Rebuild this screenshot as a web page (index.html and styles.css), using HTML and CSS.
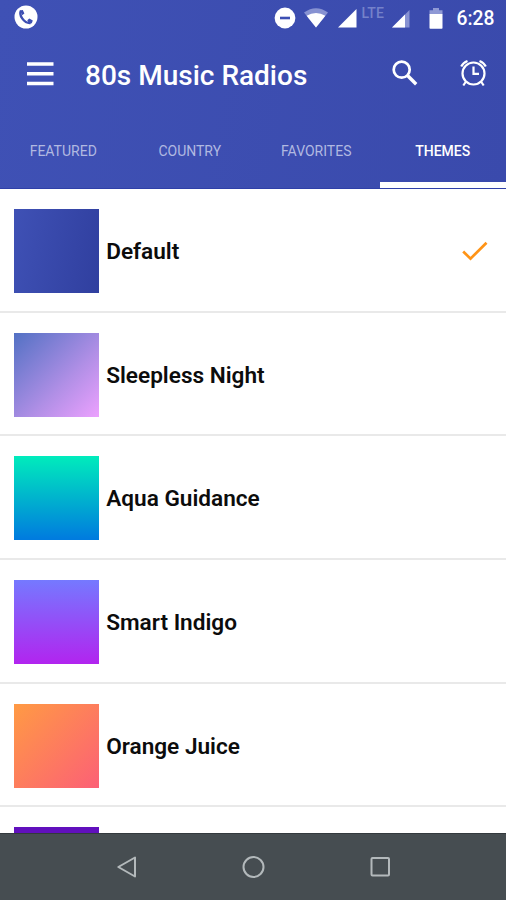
FILE: index.html
```html
<!DOCTYPE html>
<html lang="en">
<head>
<meta charset="utf-8">
<title>80s Music Radios</title>
<link rel="stylesheet" href="styles.css">
</head>
<body>
<div class="screen">
  <header class="header">
    <div class="status">
      <svg class="call" width="24" height="24" viewBox="0 0 24 24"><circle cx="12" cy="12" r="11.5" fill="#fff"/><path d="M7 5.500C4.500 10 10 18.500 16.500 18" fill="none" stroke="#3d4fb3" stroke-width="2.400"/><path d="M6.200 5.500l2.600-.6 1.600 3.600-2.300 1.700zM13.300 15.300l2-1.900 3.500 2.100-1 2.700-2.800.5z" fill="#3d4fb3"/></svg>
      <svg class="dnd" width="22" height="22" viewBox="0 0 22 22"><circle cx="11" cy="11" r="10.400" fill="#fff"/><path d="M6 11h10" stroke="#3d4fb3" stroke-width="2.600"/></svg>
      <svg class="wifi" width="24" height="20" viewBox="0 0 24 20"><path d="M0 4.500Q12-4 24 4.500L12 19.500z" fill="#8792d2"/><path d="M2.600 7.700Q12 2.500 21.400 7.700L12 19.500z" fill="#fff"/></svg>
      <svg class="signal" width="19" height="19" viewBox="0 0 19 19"><path d="M18.500 0v18.500H0z" fill="#fff"/></svg>
      <span class="lte">LTE</span>
      <svg class="roam" width="18" height="18" viewBox="0 0 18 18"><path d="M17.500 0v17.500H0z" fill="#8792d2"/><path d="M13 4.500v13H0z" fill="#fff"/></svg>
      <svg class="battery" width="14" height="21" viewBox="0 0 14 21"><path d="M.5 2.300h3.500V0h6v2.300h3.500v4H.5z" fill="#8f99d5"/><path d="M.5 6h13v14q0 .8-.8.8H1.300q-.8 0-.8-.8z" fill="#fff"/></svg>
      <span class="time">6:28</span>
    </div>
    <div class="toolbar">
      <svg class="menu" width="27" height="26" viewBox="0 0 27 26"><path d="M0 3h26.500M0 12.800h26.500M0 22.500h26.500" stroke="#fff" stroke-width="3.500"/></svg>
      <h1 class="title">80s Music Radios</h1>
      <svg class="search" width="26" height="26" viewBox="0 0 26 26" fill="none" stroke="#fff"><circle cx="9.700" cy="9.700" r="8" stroke-width="2.700"/><path d="M15.500 15.500l8.700 8.700" stroke-width="3.400"/></svg>
      <svg class="alarm" width="28" height="28" viewBox="0 0 28 28" fill="none" stroke="#fff" stroke-width="2.200"><circle cx="13.500" cy="14.500" r="11"/><path d="M13.500 7.500v7.300h5.500"/><path d="M1.200 7.500Q3 3.800 7.500 2M25.800 7.500Q24 3.800 19.500 2M6 22.500l-2.700 4M21 22.500l2.700 4"/></svg>
    </div>
    <nav class="tabs">
      <a class="tab">FEATURED</a>
      <a class="tab">COUNTRY</a>
      <a class="tab">FAVORITES</a>
      <a class="tab active">THEMES</a>
    </nav>
  </header>
  <main class="list">
    <div class="row"><div class="swatch default"></div><span class="name">Default</span>
      <svg class="check" width="26" height="20" viewBox="0 0 26 20"><path d="M1.200 10.500l7.300 7.200L24.500 1.700" fill="none" stroke="#ff9417" stroke-width="2.700"/></svg></div>
    <div class="row"><div class="swatch night"></div><span class="name">Sleepless Night</span></div>
    <div class="row"><div class="swatch aqua"></div><span class="name">Aqua Guidance</span></div>
    <div class="row"><div class="swatch indigo"></div><span class="name">Smart Indigo</span></div>
    <div class="row"><div class="swatch orange"></div><span class="name">Orange Juice</span></div>
    <div class="row"><div class="swatch violet"></div></div>
  </main>
  <footer class="navbar">
    <svg width="22" height="24" viewBox="0 0 22 24"><path d="M19 2.500v19L2.300 12z" fill="none" stroke="#b3b9bb" stroke-width="2" stroke-linejoin="round"/></svg>
    <svg width="24" height="24" viewBox="0 0 24 24"><circle cx="12.500" cy="12" r="10" fill="none" stroke="#b3b9bb" stroke-width="2"/></svg>
    <svg width="22" height="24" viewBox="0 0 22 24"><rect x="2.500" y="3" width="17.500" height="17.500" rx="1" fill="none" stroke="#b3b9bb" stroke-width="2"/></svg>
  </footer>
</div>
</body>
</html>
```
FILE: styles.css
```css
* { box-sizing: border-box; }
body { margin: 0; font-family: Roboto, "Liberation Sans", sans-serif; }
svg { display: block; flex: none; }
.screen { width: 506px; height: 900px; display: flex; flex-direction: column; overflow: hidden; background: #fff; }
.header { flex: none; height: 189px; display: flex; flex-direction: column; color: #fff; background: linear-gradient(100deg, #3f51b5, #3a4aac); border-bottom: 1px solid #2f40a8; }
.status { height: 36px; display: flex; align-items: center; padding-left: 14px; }
.call { margin-top: -2px; }
.dnd { margin-left: 235.500px; }
.wifi { margin-left: 8px; }
.signal { margin-left: 10px; }
.lte { width: 24px; margin: -10px 0 0 5px; font-size: 14px; line-height: 16px; color: #7582ca; font-weight: 500; }
.roam { margin: 1px 0 0 6px; }
.battery { margin-left: 19px; }
.time { margin: 1px 0 0 14px; font-size: 19.300px; font-weight: 500; line-height: 36px; }
.toolbar { height: 77px; display: flex; align-items: center; padding-left: 27px; }
.menu { margin-top: -1px; }
.title { width: 307px; margin: 2px 0 0 31px; font-size: 28px; font-weight: 500; line-height: 36px; white-space: nowrap; }
.search { margin-top: -3px; }
.alarm { margin: -3px 0 0 41.500px; }
.tabs { height: 75px; display: grid; grid-template-columns: repeat(4, 1fr); }
.tab { display: flex; justify-content: center; padding-top: 28px; font-size: 14px; line-height: 20px; color: #b1b9e1; }
.tab.active { color: #fff; font-weight: 500; border-bottom: 6px solid #fff; }
.list { flex: 1; min-height: 0; overflow: hidden; }
.row { height: 123.700px; display: flex; align-items: center; padding: 2px 18px 0 14.400px; border-bottom: 2px solid #e9e9e9; }
.swatch { flex: none; width: 84.500px; height: 84px; }
.default { background: linear-gradient(100deg, #3f51b5, #303f9f); }
.night { background: linear-gradient(135deg, #5271c4, #b18fe6 60%, #eca1fe); }
.aqua { background: linear-gradient(#00ecbc, #007adf); }
.indigo { background: linear-gradient(#7579ff, #b224ef); }
.orange { background: linear-gradient(135deg, #ff9a44, #fc6076); }
.violet { background: #6110bd; }
.name { margin: 2px 0 0 7.300px; font-size: 22.600px; line-height: 30px; font-weight: 600; color: #0c0c0c; }
.check { margin-left: auto; }
.navbar { flex: none; height: 67px; display: flex; justify-content: center; align-items: center; gap: 103.500px; background: #464d51; border-top: 1px solid #33393d; }
```
